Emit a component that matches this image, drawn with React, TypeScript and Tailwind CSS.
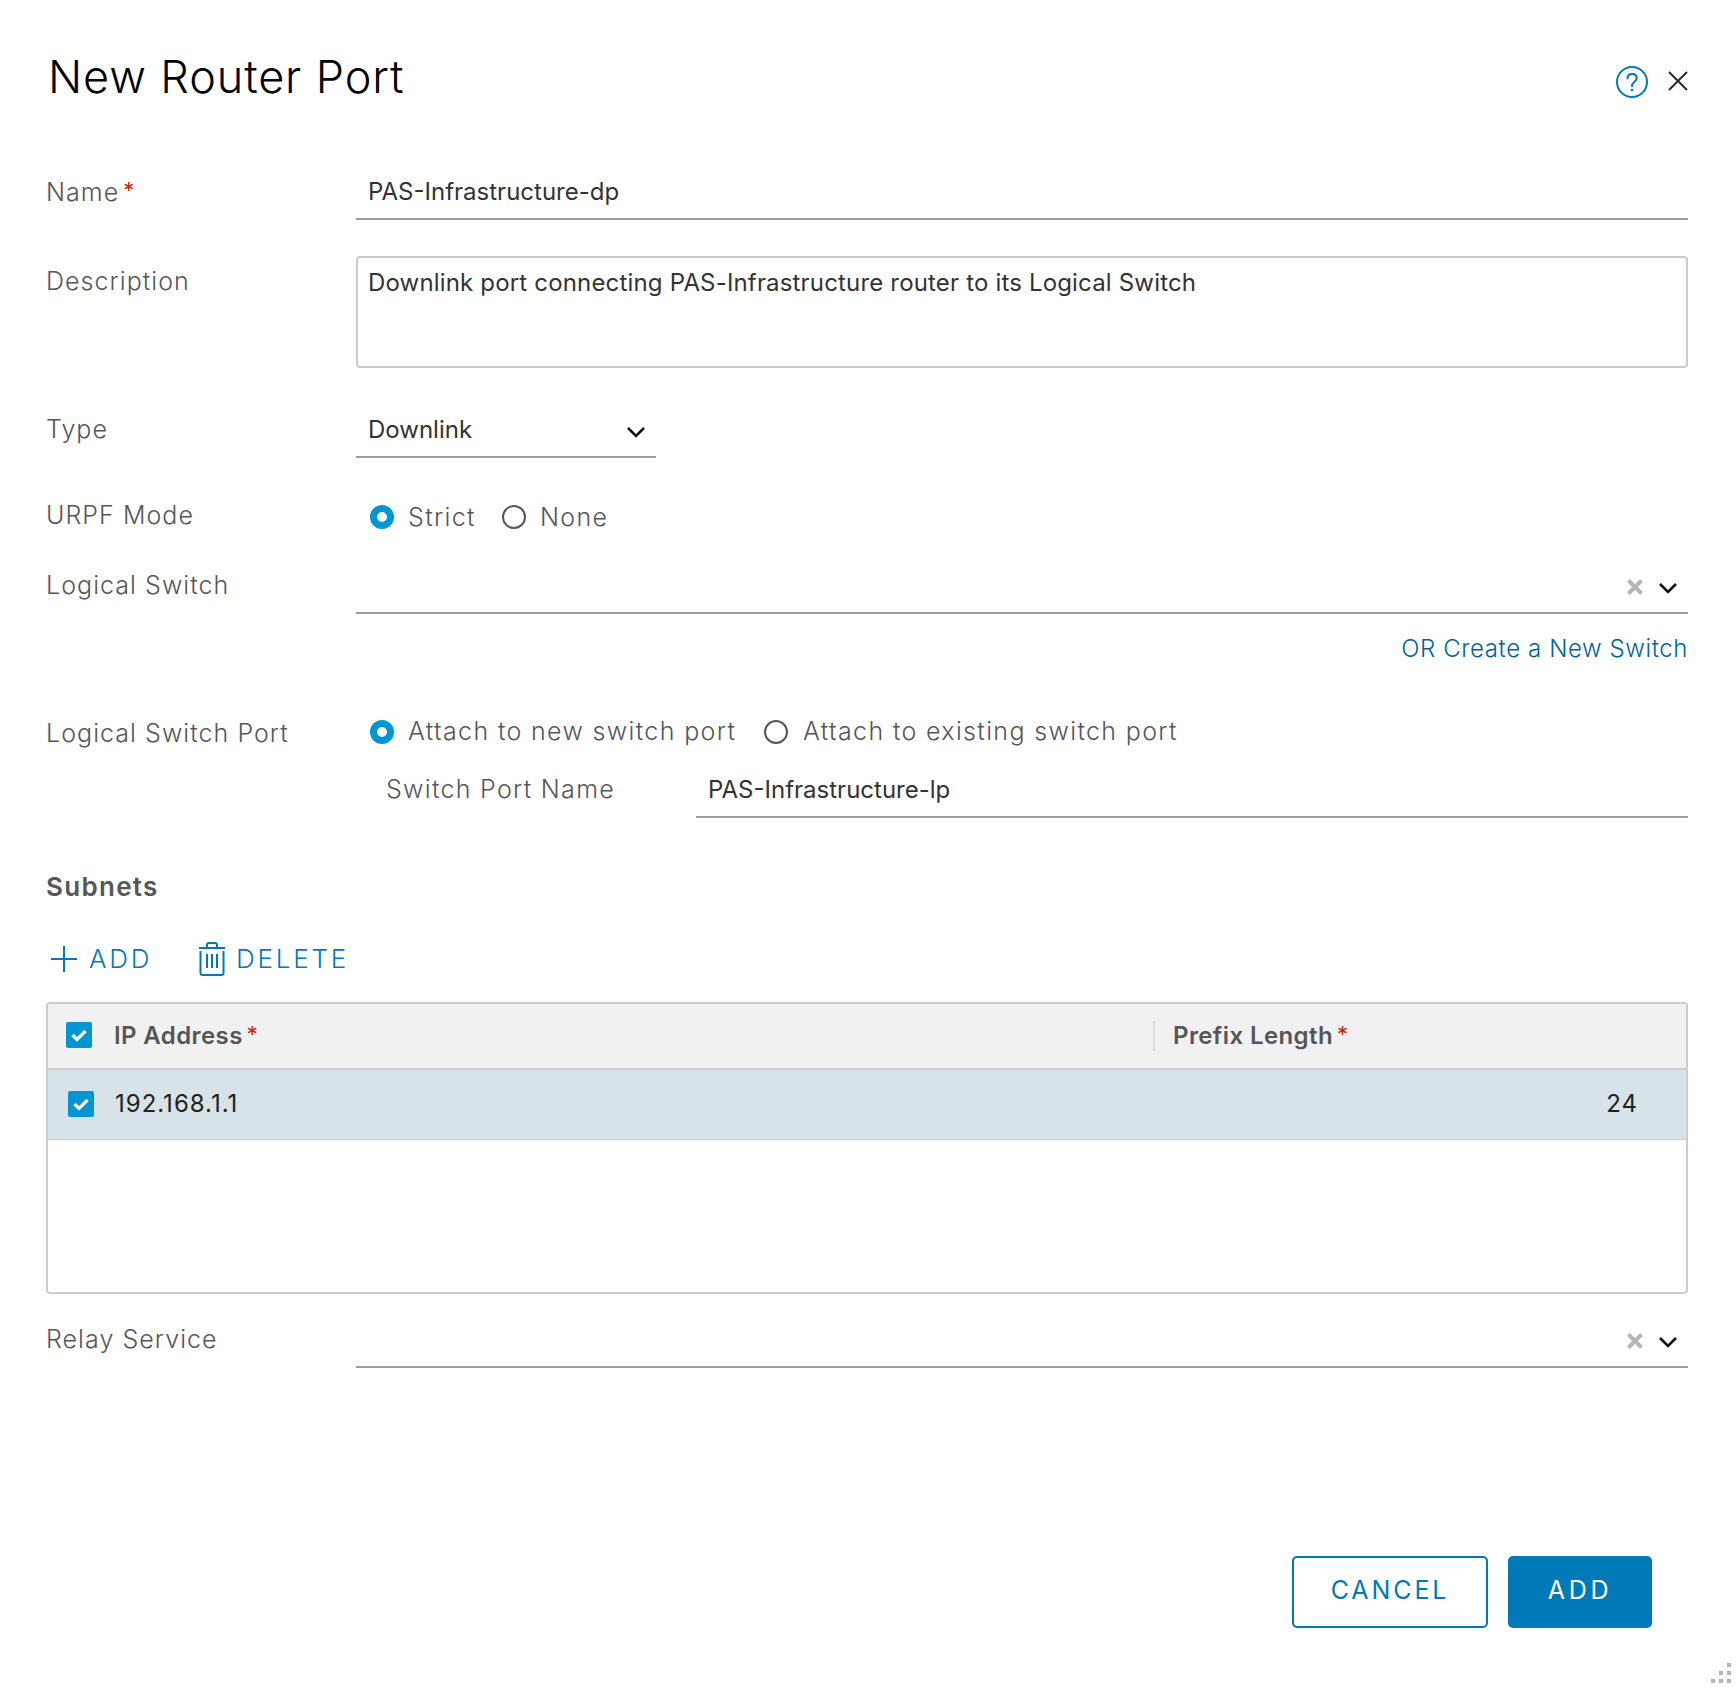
import React from "react";

const Chevron = () => (
  <svg width="20" height="12" viewBox="0 0 20 12" fill="none" stroke="#111" strokeWidth="2.6"><path d="M2 2l8 8 8-8" /></svg>
);

const Clear = () => (
  <svg width="16" height="16" viewBox="0 0 16 16" fill="none" stroke="#b5b5b5" strokeWidth="4"><path d="M1.500 1.500l13 13M14.500 1.500l-13 13" /></svg>
);

const Radio = ({ on }: { on?: boolean }) =>
  on ? (
    <span className="block w-6 h-6 shrink-0 rounded-full border-[7px] border-[#0095d3] bg-white" />
  ) : (
    <span className="block w-6 h-6 shrink-0 rounded-full border-2 border-[#565656] bg-white" />
  );

const Check = () => (
  <span className="flex items-center justify-center w-[26px] h-[26px] rounded-[2px] bg-[#0095d3]">
    <svg width="16" height="14" viewBox="0 0 16 14" fill="none" stroke="#fff" strokeWidth="3.2"><path d="M1.500 7l4.500 4.500L14.500 3" /></svg>
  </span>
);

const Star = () => <span className="text-[#c92100] text-[22px] font-normal leading-none ml-[4px] relative -top-[2px]">*</span>;

const Label = ({ children, className = "" }: { children: React.ReactNode; className?: string }) => (
  <div className={"w-[310px] shrink-0 text-[#565656] text-[25px] tracking-[1.05px] leading-[30px] flex items-center " + className}>{children}</div>
);

export default function App() {
  return (
    <div className="relative w-[1736px] h-[1688px] bg-white pl-[46px] pr-[48px] overflow-hidden font-[family-name:Inter,sans-serif] font-light">
      <div className="flex items-center justify-between h-[50px] mt-[52px] pl-[2px]">
        <h1 className="text-[45px] leading-[50px] text-black font-light tracking-[0.9px]">New Router Port</h1>
        <div className="flex items-center gap-[20px] mt-[9px]">
          <svg width="32" height="32" viewBox="0 0 32 32" fill="none" stroke="#0079b8" strokeWidth="2">
            <circle cx="16" cy="16" r="15" />
            <path d="M11.500 12.500c0-2.800 2-4.500 4.700-4.500s4.500 1.700 4.500 4.200c0 3.600-4.700 3.600-4.700 8" strokeLinecap="round" />
            <circle cx="16" cy="24" r="1.300" fill="#0079b8" stroke="none" />
          </svg>
          <svg width="20" height="20" viewBox="0 0 20 20" fill="none" stroke="#2a2a2a" strokeWidth="2" className="-mt-[2px]"><path d="M1 1l18 18M19 1L1 19" /></svg>
        </div>
      </div>

      <div className="flex mt-[62px]">
        <Label className="h-[55px]">Name<Star /></Label>
        <div className="flex-1 h-[56px] border-b-2 border-[#9a9a9a] pl-[12px] pt-[13px] text-[24px] leading-[30px] text-[#333] font-normal">PAS-Infrastructure-dp</div>
      </div>

      <div className="flex mt-[36px]">
        <Label className="h-[50px]">Description</Label>
        <div className="flex-1 h-[112px] border-2 border-[#ccc] rounded-[4px] pl-[10px] pt-[10px] text-[24px] leading-[30px] text-[#333] font-normal tracking-[0.17px]">Downlink port connecting PAS-Infrastructure router to its Logical Switch</div>
      </div>

      <div className="flex mt-[36px]">
        <Label className="h-[49px]">Type</Label>
        <div className="w-[300px] h-[54px] border-b-2 border-[#9a9a9a] pl-[12px] pr-[10px] flex items-center justify-between text-[24px] text-[#333] font-normal">
          <span>Downlink</span>
          <span className="flex pt-[3px]"><Chevron /></span>
        </div>
      </div>

      <div className="flex mt-[47px] h-[24px] items-center">
        <Label className="h-[24px] -mt-[5px]">URPF Mode</Label>
        <div className="flex items-center pl-[14px] text-[25px] text-[#565656] tracking-[1.35px]">
          <Radio on /><span className="ml-[14px] pt-[1px] w-[65px]">Strict</span>
          <span className="ml-[29px]"><Radio /></span><span className="ml-[14px] pt-[1px]">None</span>
        </div>
      </div>

      <div className="flex mt-[29px]">
        <Label className="h-[54px]">Logical Switch</Label>
        <div className="flex-1 h-[56px] border-b-2 border-[#9a9a9a] flex items-center justify-end gap-[15px] pr-[10px] pt-[4px]">
          <Clear /><span className="flex pt-[1px]"><Chevron /></span>
        </div>
      </div>

      <div className="flex justify-end mt-[19px] h-[30px] items-center pt-[1px] text-[24px] text-[#00629e] tracking-[0.6px]">OR Create a New Switch</div>

      <div className="flex mt-[55px]">
        <Label className="h-[28px] mt-[1px]">Logical Switch Port</Label>
        <div className="flex items-center h-[28px] pl-[14px] text-[25px] text-[#565656] tracking-[1.35px]">
          <Radio on /><span className="ml-[14px] w-[329px] whitespace-nowrap">Attach to new switch port</span>
          <span className="ml-[27px]"><Radio /></span><span className="ml-[15px] whitespace-nowrap">Attach to existing switch port</span>
        </div>
      </div>

      <div className="flex mt-[15px] pl-[340px]">
        <div className="w-[310px] h-[56px] flex items-center text-[25px] text-[#565656] tracking-[1.3px]">Switch Port Name</div>
        <div className="flex-1 h-[56px] border-b-2 border-[#9a9a9a] pl-[12px] pt-[2px] flex items-center text-[24px] text-[#333] font-normal">PAS-Infrastructure-lp</div>
      </div>

      <div className="mt-[53px] h-[30px] flex items-center text-[26px] font-semibold text-[#565656] tracking-[1.300px]">Subnets</div>

      <div className="mt-[42px] h-[32px] flex items-center text-[#0079b8] text-[26px] tracking-[2.800px]">
        <svg width="28" height="28" viewBox="0 0 28 28" fill="none" stroke="#0079b8" strokeWidth="2" className="ml-[4px]"><path d="M14 1v26M1 14h26" /></svg>
        <span className="ml-[11px] w-[64px] -mt-[2px]">ADD</span>
        <svg width="30" height="34" viewBox="0 0 30 34" fill="none" stroke="#0079b8" strokeWidth="2" className="ml-[44px]">
          <path d="M2 6h26M10 6V3c0-1 1-2 2-2h6c1 0 2 1 2 2v3" />
          <path d="M3.500 9v22c0 1 1 2 2 2h19c1 0 2-1 2-2V9" />
          <path d="M10 12v14M15 12v14M20 12v14" />
        </svg>
        <span className="ml-[9px] -mt-[2px]">DELETE</span>
      </div>

      <div className="mt-[27px] h-[292px] border-2 border-[#ccc] rounded-[4px] overflow-hidden">
        <div className="flex items-center h-[66px] bg-[#f1f1f1] border-b-2 border-[#ccc] text-[24px] font-semibold text-[#565656] tracking-[0.4px]">
          <span className="ml-[18px] -mt-[2px]"><Check /></span>
          <span className="ml-[22px] w-[1039px] flex items-center">IP Address<Star /></span>
          <span className="w-[2px] h-[30px] bg-[#ddd]" />
          <span className="ml-[18px] flex items-center">Prefix Length<Star /></span>
        </div>
        <div className="flex items-center h-[70px] bg-[#d8e3e9] border-b border-[#ccc] pb-[2px] text-[24px] text-[#222] font-normal tracking-[1px]">
          <span className="ml-[20px]"><Check /></span>
          <span className="ml-[21px] flex-1">192.168.1.1</span>
          <span className="mr-[48px]">24</span>
        </div>
      </div>

      <div className="flex mt-[18px]">
        <Label className="h-[54px]">Relay Service</Label>
        <div className="flex-1 h-[56px] border-b-2 border-[#9a9a9a] flex items-center justify-end gap-[15px] pr-[10px] pt-[4px]">
          <Clear /><span className="flex pt-[1px]"><Chevron /></span>
        </div>
      </div>

      <div className="flex justify-end gap-[20px] mt-[188px] mr-[36px]">
        <button className="w-[196px] h-[72px] border-2 border-[#0079b8] rounded-[5px] text-[#0079b8] text-[25px] font-normal tracking-[2.900px] pb-[2px]">CANCEL</button>
        <button className="w-[144px] h-[72px] bg-[#0079b8] rounded-[5px] text-white text-[25px] font-normal tracking-[3.800px] pb-[2px]">ADD</button>
      </div>

      <svg width="24" height="24" viewBox="0 0 24 24" fill="#b5b5b5" className="absolute right-[2px] bottom-[2px]">
        <rect x="17" y="1" width="4" height="4" />
        <rect x="9" y="9" width="4" height="4" /><rect x="17" y="9" width="4" height="4" />
        <rect x="1" y="17" width="4" height="4" /><rect x="9" y="17" width="4" height="4" /><rect x="17" y="17" width="4" height="4" />
      </svg>
    </div>
  );
}
